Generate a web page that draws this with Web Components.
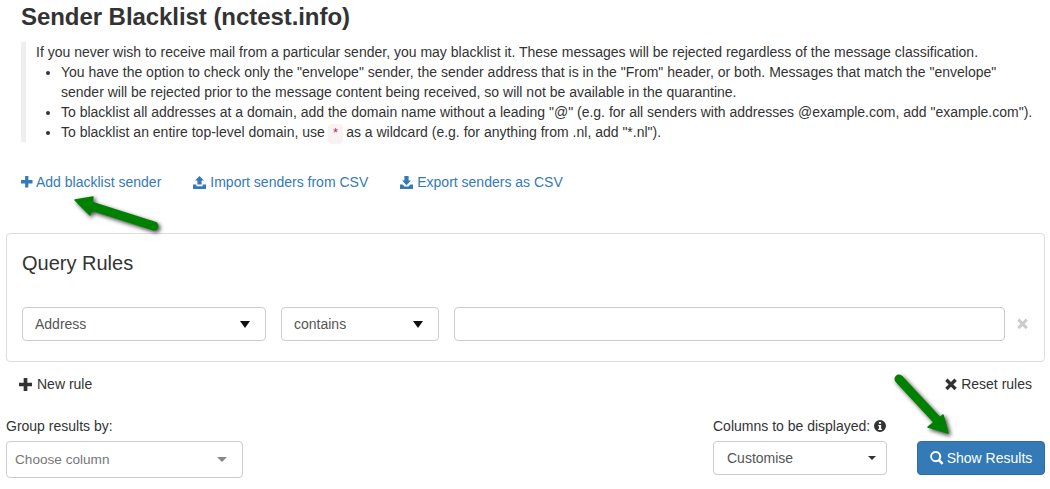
<!DOCTYPE html>
<html>
<head>
<meta charset="utf-8">
<title>Sender Blacklist</title>
<style>
  html, body { margin: 0; background: #fff; }
  body { font: 14px/20px "Liberation Sans", Arial, sans-serif; color: #333; }
</style>
</head>
<body>
<blacklist-page></blacklist-page>

<script>
const ICONS = {
  plus: '<path d="M4.3 0h3.4v4.3H12v3.4H7.7V12H4.3V7.7H0V4.3h4.3z"/>',
  upload: '<path d="M6.5 0 11 4.6H8.6v4H4.4v-4H2zM0 8.6h3.4v1.6h6.2V8.6H13V13H0z"/>',
  download: '<path d="M4.4 0h4.2v4.6H11L6.5 9.2 2 4.6h2.4zM0 8.6h2.6l2 1.8h3.8l2-1.8H13V13H0z"/>',
  remove: '<path d="M2.6 0.6 6 4l3.4-3.4L11.8 3 8.4 6.4l3.4 3.4-2.4 2.4L6 8.8l-3.4 3.4L.2 9.8l3.4-3.4L.2 3z"/>',
  search: '<path fill-rule="evenodd" d="M5.6 0a5.6 5.6 0 0 1 4.6 8.8l3.3 3.3-1.7 1.7-3.3-3.3A5.6 5.6 0 1 1 5.6 0zm0 2a3.6 3.6 0 1 0 0 7.2 3.6 3.6 0 0 0 0-7.2z"/>',
  info: '<path fill-rule="evenodd" d="M6 0a6 6 0 1 1 0 12A6 6 0 0 1 6 0zM4.9 1.9v1.9h2.2V1.9zM4.2 5v1.2h.8v2.6h-.8V10h3.7V8.8h-.8V5z"/>'
};

class UiIcon extends HTMLElement {
  connectedCallback() {
    const size = this.getAttribute('size') || 12;
    const name = this.getAttribute('name');
    const box = { upload: '0 0 13 13', download: '0 0 13 13', search: '0 0 14 14' }[name] || '0 0 12 12';
    this.attachShadow({ mode: 'open' });
    this.shadowRoot.innerHTML = `
      <style>
        :host { display: inline-flex; flex: none; }
        svg { display: block; fill: currentColor; }
      </style>
      <svg width="${size}" height="${size}" viewBox="${box}">${ICONS[name]}</svg>
    `;
  }
}

class UiLink extends HTMLElement {
  connectedCallback() {
    this.attachShadow({ mode: 'open' });
    this.shadowRoot.innerHTML = `
      <style>
        :host { display: inline-flex; align-items: center; gap: var(--icon-gap, 4px); color: var(--link-color, #337ab7); }
      </style>
      <ui-icon name="${this.getAttribute('icon')}" size="${this.getAttribute('size') || 13}"></ui-icon>
      <span><slot></slot></span>
    `;
  }
}

class UiSelect extends HTMLElement {
  connectedCallback() {
    const caret = this.getAttribute('caret') || 'native';
    this.attachShadow({ mode: 'open' });
    this.shadowRoot.innerHTML = `
      <style>
        :host {
          display: flex; align-items: center; justify-content: space-between; box-sizing: border-box;
          height: 34px; background: #fff; border: 1px solid #ccc; border-radius: 4px;
          color: #555; padding: 0 15px 0 12px;
        }
        i { display: block; width: 0; height: 0; border-style: solid; border-color: transparent; }
        .native { border-width: 7px 5px 0; border-top-color: #111; }
        .small { border-width: 4px 4px 0; border-top-color: #333; margin-right: -5px; }
        .soft { border-width: 5px 5px 0; border-top-color: #888; }
      </style>
      <span><slot></slot></span>
      <i class="${caret}"></i>
    `;
  }
}

class QueryPanel extends HTMLElement {
  connectedCallback() {
    this.attachShadow({ mode: 'open' });
    this.shadowRoot.innerHTML = `
      <style>
        :host {
          display: block; box-sizing: border-box; height: 129px; margin: 41px 5px 0 6px;
          padding: 15px; border: 1px solid #ddd; border-radius: 4px;
        }
        h3 { margin: 0; height: 29px; font: 400 20px/29px "Liberation Sans", Arial, sans-serif; color: #333; }
        .rule { display: grid; grid-template-columns: 244px 158px 551px auto; gap: 15px; align-items: center; margin-top: 29px; }
        .box { box-sizing: border-box; width: 100%; height: 34px; border: 1px solid #ccc; border-radius: 4px; padding: 0 12px; margin: 0; background: #fff; }
        ui-icon { color: #ccc; margin: -2px 0 0 -3px; }
      </style>
      <h3>Query Rules</h3>
      <div class="rule">
        <ui-select>Address</ui-select>
        <ui-select>contains</ui-select>
        <input class="box" type="text">
        <ui-icon name="remove" size="11"></ui-icon>
      </div>
    `;
  }
}

class ResultControls extends HTMLElement {
  connectedCallback() {
    this.attachShadow({ mode: 'open' });
    this.shadowRoot.innerHTML = `
      <style>
        :host { display: flex; justify-content: space-between; align-items: flex-start; margin: 10px 5px 0 6px; }
        .group { width: 237px; }
        label { display: flex; align-items: center; gap: 4px; height: 20px; margin-bottom: 5px; }
        .right { display: flex; gap: 30px; }
        .choose { height: 37px; color: #777; padding: 0 15px 0 8px; font-size: 13.6px; }
        .custom { width: 174px; padding-left: 13px; }
        button {
          box-sizing: border-box; display: flex; align-items: center; justify-content: center; gap: 3px; width: 128px; height: 34px;
          margin: 25px 0 0; padding: 0; border: 1px solid #2e6da4; border-radius: 4px;
          background: #337ab7; color: #fff; font: inherit;
        }
      </style>
      <div class="group">
        <label>Group results by:</label>
        <ui-select class="choose" caret="soft">Choose column</ui-select>
      </div>
      <div class="right">
        <div>
          <label>Columns to be displayed: <ui-icon name="info" size="12"></ui-icon></label>
          <ui-select class="custom" caret="small">Customise</ui-select>
        </div>
        <button><ui-icon name="search" size="14"></ui-icon>Show Results</button>
      </div>
    `;
  }
}

class BlacklistPage extends HTMLElement {
  connectedCallback() {
    this.attachShadow({ mode: 'open' });
    this.shadowRoot.innerHTML = `
      <style>
        :host { display: block; position: relative; width: 1050px; height: 489px; overflow: hidden; }
        h1 { margin: 0 0 0 21px; height: 34px; font: 700 24px/34px "Liberation Sans", Arial, sans-serif; color: #333; letter-spacing: -0.06px; }
        blockquote { margin: 8px 0 0 21px; padding: 0 0 0 10px; border-left: 5px solid #eee; }
        ul { margin: 0; padding: 0 15px 0 25px; }
        code { font: 12.6px "Liberation Mono", monospace; color: #c7254e; background: #f9f2f4; padding: 3px 4px; margin: 0 -1px; border-radius: 4px; }
        .links { display: flex; gap: 32px; height: 20px; margin: 30px 0 0 21px; }
        .add { --icon-gap: 3.5px; }
        .rule-actions { display: flex; justify-content: space-between; align-items: center; height: 44px; margin: 0 18px 0 19px; --link-color: #333; --icon-gap: 5px; }
        .reset { --icon-gap: 4px; }
        .arrow { position: absolute; left: 0; top: 0; pointer-events: none; filter: drop-shadow(2px 2px 2px rgba(0,0,0,.75)); }
      </style>
      <h1>Sender Blacklist (nctest.info)</h1>
      <blockquote>
        If you never wish to receive mail from a particular sender, you may blacklist it. These messages will be rejected regardless of the message classification.
        <ul>
          <li>You have the option to check only the "envelope" sender, the sender address that is in the "From" header, or both. Messages that match the "envelope" sender will be rejected prior to the message content being received, so will not be available in the quarantine.</li>
          <li>To blacklist all addresses at a domain, add the domain name without a leading "@" (e.g. for all senders with addresses @example.com, add "example.com").</li>
          <li>To blacklist an entire top-level domain, use <code>*</code> as a wildcard (e.g. for anything from .nl, add "*.nl").</li>
        </ul>
      </blockquote>
      <div class="links">
        <ui-link class="add" icon="plus" size="11.5">Add blacklist sender</ui-link>
        <ui-link icon="upload">Import senders from CSV</ui-link>
        <ui-link icon="download">Export senders as CSV</ui-link>
      </div>
      <query-panel></query-panel>
      <div class="rule-actions">
        <ui-link icon="plus" size="13">New rule</ui-link>
        <ui-link class="reset" icon="remove" size="12">Reset rules</ui-link>
      </div>
      <result-controls></result-controls>
      <svg class="arrow" width="1050" height="489" fill="#008000" stroke="#008000" stroke-linejoin="round" stroke-linecap="round">
        <path d="M154 226 88 205" stroke-width="9" fill="none"/>
        <path d="M75 200 93 197 90 215Z" stroke-width="1.5"/>
        <path d="M899 379 938 421" stroke-width="9" fill="none"/>
        <path d="M948 433 943 415 928 427Z" stroke-width="1.5"/>
      </svg>
    `;
  }
}

customElements.define('ui-icon', UiIcon);
customElements.define('ui-link', UiLink);
customElements.define('ui-select', UiSelect);
customElements.define('query-panel', QueryPanel);
customElements.define('result-controls', ResultControls);
customElements.define('blacklist-page', BlacklistPage);
</script>
</body>
</html>
